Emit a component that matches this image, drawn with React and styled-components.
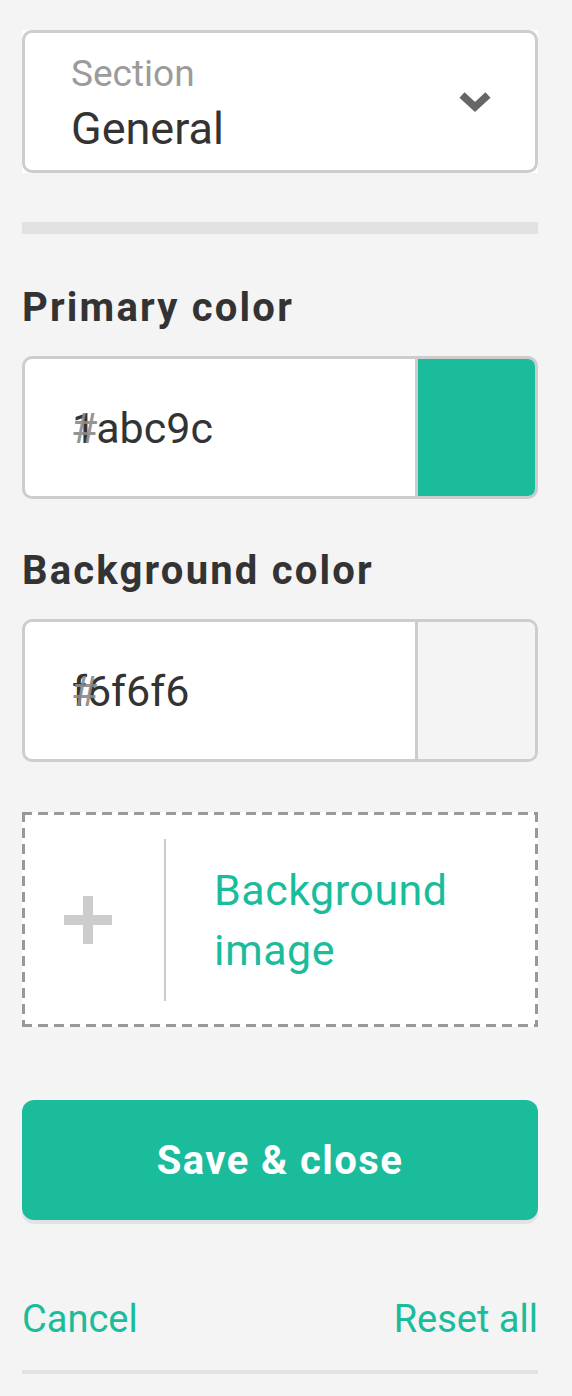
import React from "react";
import styled, { createGlobalStyle } from "styled-components";

const Global = createGlobalStyle`
  html, body { margin: 0; padding: 0; background: #f4f4f4; }
  body { font-family: Roboto, "Liberation Sans", Arial, sans-serif; color: #333; }
`;

const Page = styled.div`
  box-sizing: border-box;
  min-height: 1396px;
  padding: 30px 34px 0 22px;
  display: flex;
  flex-direction: column;
`;

const SelectWrap = styled.div`
  background: #fff;
`;

const SelectBox = styled.div`
  box-sizing: border-box;
  height: 143px;
  border: 3px solid #cdcdcd;
  border-radius: 10px;
  padding: 0 44px 0 46px;
  display: flex;
  align-items: center;
  justify-content: space-between;
`;

const SelectText = styled.div`
  display: flex;
  flex-direction: column;
  padding-top: 4px;
`;

const SelectLabel = styled.span`
  font-size: 37px;
  line-height: 44px;
  color: #9b9b9b;
`;

const SelectValue = styled.span`
  font-size: 45px;
  line-height: 54px;
  margin-top: 6px;
  color: #333;
`;

const Divider = styled.div`
  height: 12px;
  background: #e2e2e2;
  margin-top: ${(p) => p.$top}px;
`;

const FieldLabel = styled.div`
  font-size: 40px;
  font-weight: 700;
  line-height: 44px;
  color: #333;
  letter-spacing: 2.2px;
  margin-top: ${(p) => p.$top}px;
  margin-bottom: 26px;
`;

const ColorInput = styled.div`
  box-sizing: border-box;
  height: 143px;
  border: 3px solid #cdcdcd;
  border-radius: 10px;
  display: flex;
  overflow: hidden;
  background: #fff;
`;

const InputArea = styled.div`
  flex: 1;
  position: relative;
  display: flex;
  align-items: center;
  padding-left: 47px;
  font-size: 43px;
  color: #333;
`;

const Hash = styled.span`
  position: absolute;
  left: 46px;
  color: #8a8a8a;
  opacity: 0.9;
`;

const Swatch = styled.div`
  width: 117px;
  border-left: 3px solid #cdcdcd;
  background: ${(p) => p.$color};
`;

const Upload = styled.div`
  box-sizing: border-box;
  margin-top: 50px;
  height: 215px;
  background-color: #fff;
  background-image:
    repeating-linear-gradient(90deg, #999 0 10px, transparent 10px 16px),
    repeating-linear-gradient(90deg, #999 0 10px, transparent 10px 16px),
    repeating-linear-gradient(180deg, #999 0 10px, transparent 10px 16px),
    repeating-linear-gradient(180deg, #999 0 10px, transparent 10px 16px);
  background-size: 100% 3px, 100% 3px, 3px 100%, 3px 100%;
  background-position: 0 0, 0 100%, 0 0, 100% 0;
  background-repeat: no-repeat;
  display: flex;
  align-items: center;
`;

const PlusCell = styled.div`
  box-sizing: border-box;
  width: 142px;
  padding-right: 10px;
  display: flex;
  justify-content: center;
  align-items: center;
`;

const VLine = styled.div`
  width: 2px;
  height: 162px;
  background: #cccccc;
`;

const UploadText = styled.div`
  padding-left: 48px;
  font-size: 43px;
  line-height: 60px;
  letter-spacing: 0.5px;
  color: #1abc9c;
`;

const SaveButton = styled.button`
  margin-top: 73px;
  height: 120px;
  border: none;
  border-radius: 12px;
  background: #1abc9c;
  box-shadow: 0 4px 0 #e2e2e2;
  color: #fff;
  font-family: Roboto, "Liberation Sans", Arial, sans-serif;
  font-size: 40px;
  font-weight: 700;
  letter-spacing: 1.4px;
  cursor: pointer;
`;

const LinkRow = styled.div`
  margin-top: 76px;
  display: flex;
  justify-content: space-between;
  align-items: baseline;
`;

const TextLink = styled.a`
  font-size: 38px;
  line-height: 46px;
  color: #1abc9c;
  text-decoration: none;
`;

const BottomLine = styled.div`
  height: 4px;
  background: #e2e2e2;
  margin-top: 28px;
`;

const Chevron = () => (
  <svg width="32" height="22" viewBox="0 0 32 22">
    <path d="M3 4 L16 16 L29 4" fill="none" stroke="#666" strokeWidth="7.5" strokeLinejoin="miter" />
  </svg>
);

const Plus = () => (
  <svg width="48" height="48" viewBox="0 0 48 48">
    <rect x="19" y="0" width="10" height="48" fill="#cccccc" />
    <rect x="0" y="19" width="48" height="10" fill="#cccccc" />
  </svg>
);

const ColorField = ({ value, color }) => (
  <ColorInput>
    <InputArea>
      <Hash>#</Hash>
      {value}
    </InputArea>
    <Swatch $color={color} />
  </ColorInput>
);

export default function App() {
  return (
    <>
      <Global />
      <Page>
        <SelectWrap>
          <SelectBox>
            <SelectText>
              <SelectLabel>Section</SelectLabel>
              <SelectValue>General</SelectValue>
            </SelectText>
            <Chevron />
          </SelectBox>
        </SelectWrap>
        <Divider $top={49} />
        <FieldLabel $top={52}>Primary color</FieldLabel>
        <ColorField value="1abc9c" color="#1abc9c" />
        <FieldLabel $top={50}>Background color</FieldLabel>
        <ColorField value="f6f6f6" color="#f4f4f4" />
        <Upload>
          <PlusCell>
            <Plus />
          </PlusCell>
          <VLine />
          <UploadText>
            Background
            <br />
            image
          </UploadText>
        </Upload>
        <SaveButton>Save &amp; close</SaveButton>
        <LinkRow>
          <TextLink href="#">Cancel</TextLink>
          <TextLink href="#">Reset all</TextLink>
        </LinkRow>
        <BottomLine />
      </Page>
    </>
  );
}
